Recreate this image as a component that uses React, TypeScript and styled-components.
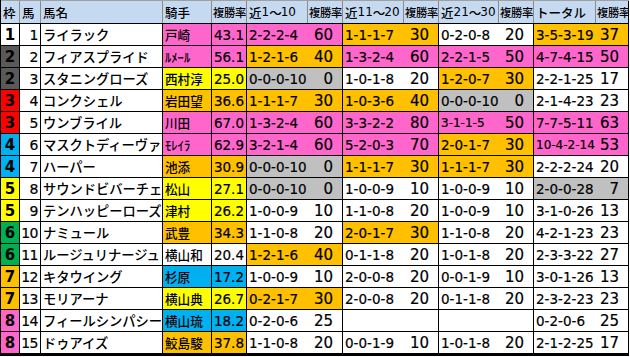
import React from "react";
import styled, { createGlobalStyle } from "styled-components";

const Global = createGlobalStyle`
  html, body { margin: 0; padding: 0; background: #ffffff; }
  body { font-family: "DejaVu Sans", "Noto Sans CJK JP", sans-serif; color: #000; }
`;

const COLS = "19px 21px 122px 49px 35px 61px 35px 61px 35px 60px 35px 62px 33px";

const BG: Record<string, string> = {
  white: "#ffffff",
  pink: "#ff66cc",
  orange: "#ffc000",
  yellow: "#ffff00",
  gray: "#c0c0c0",
  blue: "#00b0f0",
};

const WAKU: Record<number, string> = {
  1: "#ffffff",
  2: "#595959",
  3: "#ff0000",
  4: "#00b0f0",
  5: "#ffff00",
  6: "#00b050",
  7: "#ffc000",
  8: "#ff66cc",
};

const Table = styled.div`
  width: 629px;
  box-sizing: border-box;
  border-left: 1px solid #000;
  border-bottom: 2px solid #000;
  display: flex;
  flex-direction: column;
`;

const HeaderRow = styled.div`
  display: grid;
  grid-template-columns: ${COLS};
  height: 24px;
  background: #c5d9f1;
  border-top: 1px solid #a0a0a0;
  border-bottom: 1px solid #000;
  box-sizing: border-box;
`;

const HeadCell = styled.div<{ $small?: boolean }>`
  border-right: 1px solid #8a8a8a;
  display: flex;
  align-items: center;
  padding-left: ${(p) => (p.$small ? "1px" : "2px")};
  font-family: "Noto Sans CJK JP", sans-serif;
  font-size: ${(p) => (p.$small ? "11.3px" : "12.5px")};
  font-weight: 500;
  white-space: nowrap;
  overflow: hidden;
  letter-spacing: ${(p) => (p.$small ? "-0.3px" : "0")};
  &:last-child { border-right: 1px solid #000; }
`;

const HeadNum = styled.span`
  font-family: "DejaVu Sans", sans-serif;
  font-size: 12px;
`;

const Tilde = styled.span`
  letter-spacing: -1px;
`;

const Row = styled.div`
  display: grid;
  grid-template-columns: ${COLS};
  height: 22px;
  border-bottom: 1px solid #000;
  box-sizing: border-box;
`;

const Cell = styled.div<{ $bg?: string; $align?: "left" | "right" | "center" }>`
  background: ${(p) => p.$bg || "#fff"};
  border-right: 1px solid #000;
  display: flex;
  align-items: center;
  justify-content: ${(p) =>
    p.$align === "right" ? "flex-end" : p.$align === "center" ? "center" : "flex-start"};
  overflow: hidden;
  white-space: nowrap;
  box-sizing: border-box;
`;

const WakuCell = styled(Cell)`
  font-size: 15px;
  font-weight: 700;
  font-family: "DejaVu Sans", sans-serif;
`;

const UmaCell = styled(Cell)`
  font-size: 14px;
  font-family: "DejaVu Sans", sans-serif;
  padding-right: 2px;
  letter-spacing: -0.5px;
  -webkit-text-stroke: 0.2px #000;
`;

const NameCell = styled(Cell)`
  font-family: "Noto Sans CJK JP", sans-serif;
  font-size: 13.3px;
  font-weight: 500;
  padding-left: 2px;
  overflow: visible;
  position: relative;
  z-index: 1;
  letter-spacing: -0.05px;
`;

const JockeyCell = styled(Cell)`
  font-family: "Noto Sans CJK JP", sans-serif;
  font-size: 12.6px;
  font-weight: 500;
  padding-left: 2px;
  position: relative;
  z-index: 2;
`;

const RateCell = styled(Cell)`
  font-family: "DejaVu Sans", sans-serif;
  font-size: 13.5px;
  padding-right: 2px;
  -webkit-text-stroke: 0.2px #000;
`;

const Group = styled.div<{ $bg: string }>`
  grid-column: span 2;
  background: ${(p) => p.$bg};
  border-right: 1px solid #000;
  display: flex;
  align-items: center;
  justify-content: space-between;
  padding: 0 9px 0 2px;
  box-sizing: border-box;
  font-family: "DejaVu Sans", sans-serif;
  white-space: nowrap;
  overflow: hidden;
  -webkit-text-stroke: 0.2px #000;
`;

const Record = styled.span<{ $small?: boolean }>`
  font-size: ${(p) => (p.$small ? "12px" : "13.5px")};
`;

const Pct = styled.span`
  font-size: 15px;
`;

type G = [string, string, string] | null;
type R = [number, number, string, string, string, string, G, G, G, G];

const rows: R[] = [
  [1, 1, "ライラック", "戸崎", "pink", "43.1", ["2-2-2-4", "60", "pink"], ["1-1-1-7", "30", "orange"], ["0-2-0-8", "20", "white"], ["3-5-3-19", "37", "orange"]],
  [2, 2, "フィアスプライド", "ﾙﾒｰﾙ", "pink", "56.1", ["1-2-1-6", "40", "orange"], ["1-3-2-4", "60", "pink"], ["2-2-1-5", "50", "pink"], ["4-7-4-15", "50", "pink"]],
  [2, 3, "スタニングローズ", "西村淳", "yellow", "25.0", ["0-0-0-10", "0", "gray"], ["1-0-1-8", "20", "white"], ["1-2-0-7", "30", "orange"], ["2-2-1-25", "17", "white"]],
  [3, 4, "コンクシェル", "岩田望", "orange", "36.6", ["1-1-1-7", "30", "orange"], ["1-0-3-6", "40", "orange"], ["0-0-0-10", "0", "gray"], ["2-1-4-23", "23", "white"]],
  [3, 5, "ウンブライル", "川田", "pink", "67.0", ["1-3-2-4", "60", "pink"], ["3-3-2-2", "80", "pink"], ["3-1-1-5", "50", "pink"], ["7-7-5-11", "63", "pink"]],
  [4, 6, "マスクトディーヴァ", "ﾓﾚｲﾗ", "pink", "62.9", ["3-2-1-4", "60", "pink"], ["5-2-0-3", "70", "pink"], ["2-0-1-7", "30", "orange"], ["10-4-2-14", "53", "pink"]],
  [4, 7, "ハーパー", "池添", "orange", "30.9", ["0-0-0-10", "0", "gray"], ["1-1-1-7", "30", "orange"], ["1-1-1-7", "30", "orange"], ["2-2-2-24", "20", "white"]],
  [5, 8, "サウンドビバーチェ", "松山", "yellow", "27.1", ["0-0-0-10", "0", "gray"], ["1-0-0-9", "10", "white"], ["1-0-0-9", "10", "white"], ["2-0-0-28", "7", "gray"]],
  [5, 9, "テンハッピーローズ", "津村", "yellow", "26.2", ["1-0-0-9", "10", "white"], ["1-1-0-8", "20", "white"], ["1-0-0-9", "10", "white"], ["3-1-0-26", "13", "white"]],
  [6, 10, "ナミュール", "武豊", "orange", "34.3", ["1-1-0-8", "20", "white"], ["2-0-1-7", "30", "orange"], ["1-1-0-8", "20", "white"], ["4-2-1-23", "23", "white"]],
  [6, 11, "ルージュリナージュ", "横山和", "white", "20.4", ["1-2-1-6", "40", "orange"], ["0-1-1-8", "20", "white"], ["1-0-1-8", "20", "white"], ["2-3-3-22", "27", "white"]],
  [7, 12, "キタウイング", "杉原", "blue", "17.2", ["1-0-0-9", "10", "white"], ["2-0-0-8", "20", "white"], ["0-0-1-9", "10", "white"], ["3-0-1-26", "13", "white"]],
  [7, 13, "モリアーナ", "横山典", "yellow", "26.7", ["0-2-1-7", "30", "orange"], ["2-0-0-8", "20", "white"], ["0-1-1-8", "20", "white"], ["2-3-2-23", "23", "white"]],
  [8, 14, "フィールシンパシー", "横山琉", "blue", "18.2", ["0-2-0-6", "25", "white"], null, null, ["0-2-0-6", "25", "white"]],
  [8, 15, "ドゥアイズ", "鮫島駿", "orange", "37.8", ["1-1-0-8", "20", "white"], ["0-0-1-9", "10", "white"], ["1-0-1-8", "20", "white"], ["2-1-2-25", "17", "white"]],
];

const GroupCell: React.FC<{ g: G; small?: boolean }> = ({ g, small }) => (
  <Group $bg={g ? BG[g[2]] : "#fff"}>
    <Record $small={small}>{g ? g[0] : ""}</Record>
    <Pct>{g ? g[1] : ""}</Pct>
  </Group>
);

const RangeHead: React.FC<{ a: string; b: string }> = ({ a, b }) => (
  <HeadCell>
    近<HeadNum>{a}</HeadNum>
    <Tilde>～</Tilde>
    <HeadNum>{b}</HeadNum>
  </HeadCell>
);

export default function App() {
  return (
    <>
      <Global />
      <Table>
        <HeaderRow>
          <HeadCell>枠</HeadCell>
          <HeadCell>馬</HeadCell>
          <HeadCell>馬名</HeadCell>
          <HeadCell>騎手</HeadCell>
          <HeadCell $small>複勝率</HeadCell>
          <RangeHead a="1" b="10" />
          <HeadCell $small>複勝率</HeadCell>
          <RangeHead a="11" b="20" />
          <HeadCell $small>複勝率</HeadCell>
          <RangeHead a="21" b="30" />
          <HeadCell $small>複勝率</HeadCell>
          <HeadCell>トータル</HeadCell>
          <HeadCell $small>複勝率</HeadCell>
        </HeaderRow>
        {rows.map((r) => (
          <Row key={r[1]}>
            <WakuCell $bg={WAKU[r[0]]} $align="center">{r[0]}</WakuCell>
            <UmaCell $align="right">{r[1]}</UmaCell>
            <NameCell>{r[2]}</NameCell>
            <JockeyCell $bg={BG[r[4]]}>{r[3]}</JockeyCell>
            <RateCell $bg={BG[r[4]]} $align="right">{r[5]}</RateCell>
            <GroupCell g={r[6]} />
            <GroupCell g={r[7]} />
            <GroupCell g={r[8]} small={r[1] === 5} />
            <GroupCell g={r[9]} small={r[1] === 6} />
          </Row>
        ))}
      </Table>
    </>
  );
}
